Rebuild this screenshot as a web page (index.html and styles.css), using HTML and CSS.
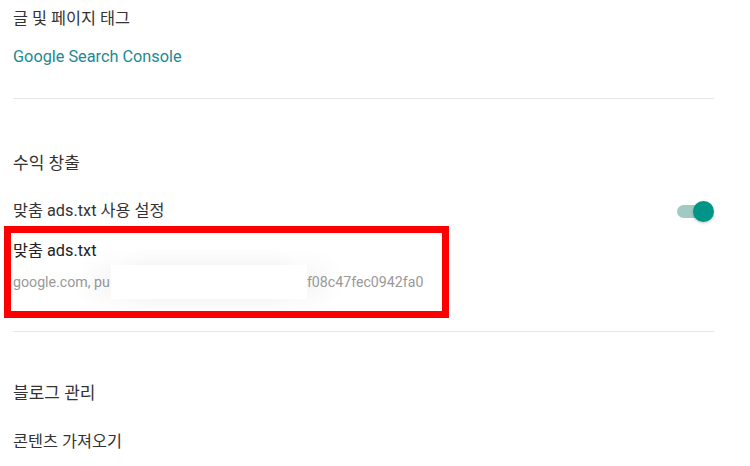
FILE: index.html
```html
<!DOCTYPE html>
<html lang="ko">
  <head>
    <meta charset="UTF-8" />
    <meta name="viewport" content="width=device-width, initial-scale=1.0" />
    <title>블로그 설정</title>
    <link rel="stylesheet" href="styles.css">
  </head>
  <body>
    <div class="settings">
      <div class="item">글 및 페이지 태그</div>
      <a class="item link" href="#">Google Search Console</a>
      <hr class="divider" />

      <h2 class="section-title first">수익 창출</h2>
      <div class="item toggle-row">
        <span>맞춤 ads.txt 사용 설정</span>
        <span class="switch"><span class="thumb"></span></span>
      </div>
      <div class="highlight">
        <div class="ads-title">맞춤 ads.txt</div>
        <div class="ads-value">
          <span>google.com, pu</span><span class="mask"></span><span>f08c47fec0942fa0</span>
        </div>
      </div>
      <hr class="divider second" />

      <h2 class="section-title">블로그 관리</h2>
      <div class="item last">콘텐츠 가져오기</div>
    </div>
  </body>
</html>
```

FILE: styles.css
```css
body {
  margin: 0;
  background: #fff;
  font-family: Roboto, "Noto Sans CJK KR", sans-serif;
  color: #333;
}
.settings {
  width: 701px;
  padding-left: 13px;
}
.item {
  display: block;
  font-size: 16.3px;
  line-height: 38px;
  color: #333;
  text-decoration: none;
}
.link {
  color: #1b8a93;
}
.divider {
  border: 0;
  height: 1px;
  background: #e6e6e6;
  margin: 22px 0 0;
}
.section-title {
  margin: 41px 0 0;
  font-size: 17px;
  font-weight: normal;
  line-height: 40px;
  color: #333;
}
.section-title.first {
  margin-top: 44px;
}
.toggle-row {
  display: flex;
  align-items: center;
  justify-content: space-between;
  margin-top: 9px;
}
.switch {
  position: relative;
  width: 28px;
  height: 13px;
  margin-right: 9px;
  border-radius: 7px;
  background: #9fcbc3;
}
.thumb {
  position: absolute;
  right: -9px;
  top: -4px;
  width: 21px;
  height: 21px;
  border-radius: 50%;
  background: #009587;
  box-shadow: 0 1px 3px rgba(0, 0, 0, 0.25);
}
.highlight {
  width: 427px;
  margin-left: -9px;
  margin-top: -4px;
  padding: 8px 2px 12px;
  border: 7px solid #ff0000;
}
.ads-title {
  font-size: 16.3px;
  line-height: 20px;
  color: #222;
}
.ads-value {
  display: flex;
  align-items: center;
  margin-top: 4px;
  font-size: 14.2px;
  line-height: 20px;
  color: #999;
}
.mask {
  width: 196px;
  height: 34px;
  margin-left: 1px;
  background: #fff;
  box-shadow: -20px 0 24px rgba(0, 0, 0, 0.04), 20px 0 24px rgba(0, 0, 0, 0.04);
}
.divider.second {
  margin-top: 13px;
}
.last {
  margin-top: 10px;
}
```
